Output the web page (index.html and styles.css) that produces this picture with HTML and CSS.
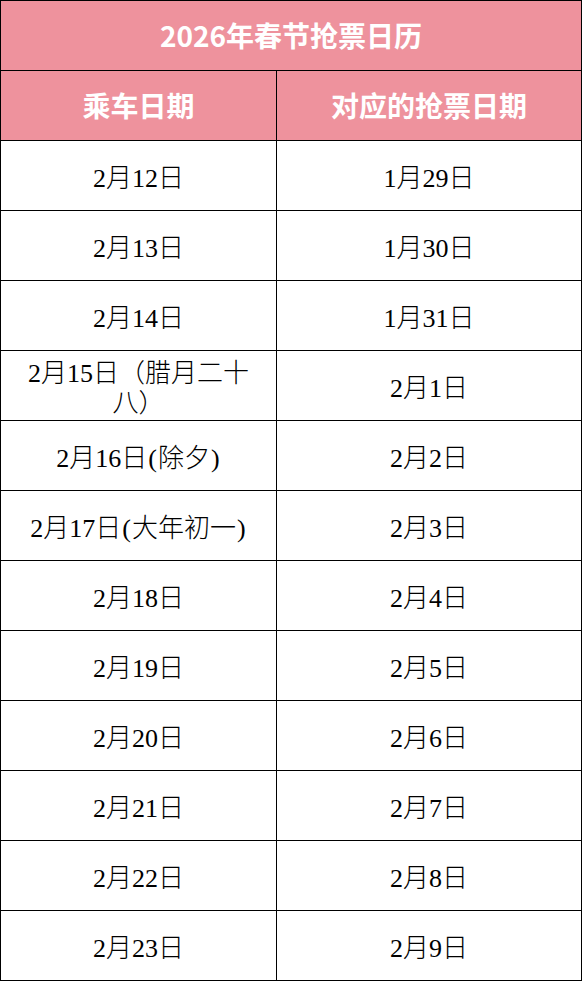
FILE: index.html
```html
<!DOCTYPE html>
<html lang="zh-CN">
<head>
<meta charset="utf-8">
<link rel="stylesheet" href="styles.css">
</head>
<body>
<div class="calendar">
  <div class="cell title">2026年春节抢票日历</div>
  <div class="cell head">乘车日期</div>
  <div class="cell head">对应的抢票日期</div>

  <div class="cell">2月12日</div><div class="cell">1月29日</div>
  <div class="cell">2月13日</div><div class="cell">1月30日</div>
  <div class="cell">2月14日</div><div class="cell">1月31日</div>
  <div class="cell">2月15日（腊月二十八）</div><div class="cell">2月1日</div>
  <div class="cell">2月16日<span class="paren">(</span>除夕<span class="paren">)</span></div><div class="cell">2月2日</div>
  <div class="cell">2月17日<span class="paren">(</span>大年初一<span class="paren">)</span></div><div class="cell">2月3日</div>
  <div class="cell">2月18日</div><div class="cell">2月4日</div>
  <div class="cell">2月19日</div><div class="cell">2月5日</div>
  <div class="cell">2月20日</div><div class="cell">2月6日</div>
  <div class="cell">2月21日</div><div class="cell">2月7日</div>
  <div class="cell">2月22日</div><div class="cell">2月8日</div>
  <div class="cell">2月23日</div><div class="cell">2月9日</div>
</div>
</body>
</html>
```
FILE: styles.css
```css
html, body {
  margin: 0;
  padding: 0;
  background: #ffffff;
}

.calendar {
  width: 582px;
  box-sizing: border-box;
  display: grid;
  grid-template-columns: 276px 305px;
  grid-auto-rows: 70px;
  border-left: 1px solid #000;
  border-top: 1px solid #000;
  font-family: "Liberation Serif", "Noto Sans CJK SC", serif;
  font-size: 26px;
  font-weight: 300;
  color: #000;
}

.cell {
  box-sizing: border-box;
  border-right: 1px solid #000;
  border-bottom: 1px solid #000;
  display: flex;
  align-items: center;
  justify-content: center;
  text-align: center;
  padding: 6px 16px 0;
  line-height: 30px;
}

.paren {
  padding: 0 1px;
}

.title,
.head {
  background: #ee929d;
  color: #ffffff;
  font-family: "Noto Sans CJK SC", "Noto Sans", sans-serif;
  font-weight: 700;
  padding: 0 16px 2px;
}

.title {
  grid-column: 1 / span 2;
  font-size: 28px;
}

.head {
  font-size: 28px;
}
```
